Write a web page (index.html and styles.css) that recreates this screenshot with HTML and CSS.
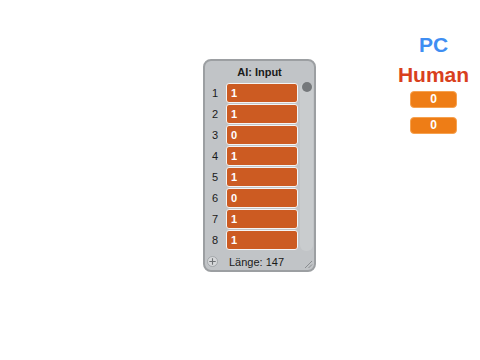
FILE: index.html
```html
<!DOCTYPE html>
<html lang="de">
<head>
    <meta charset="UTF-8">
    <title>Stage</title>
    <link rel="stylesheet" href="styles.css">
</head>
<body>
    <div class="stage">
        <!-- list monitor -->
        <div class="list-monitor">
            <div class="list-title">AI: Input</div>
            <div class="list-body">
                <div class="list-items">
                    <div class="list-row"><span class="row-index">1</span><span class="row-cell">1</span></div>
                    <div class="list-row"><span class="row-index">2</span><span class="row-cell">1</span></div>
                    <div class="list-row"><span class="row-index">3</span><span class="row-cell">0</span></div>
                    <div class="list-row"><span class="row-index">4</span><span class="row-cell">1</span></div>
                    <div class="list-row"><span class="row-index">5</span><span class="row-cell">1</span></div>
                    <div class="list-row"><span class="row-index">6</span><span class="row-cell">0</span></div>
                    <div class="list-row"><span class="row-index">7</span><span class="row-cell">1</span></div>
                    <div class="list-row"><span class="row-index">8</span><span class="row-cell">1</span></div>
                </div>
                <div class="scroll-track"><div class="scroll-knob"></div></div>
            </div>
            <div class="list-footer">
                <span class="add-btn">
                    <svg width="11" height="11" viewBox="0 0 11 11">
                        <circle cx="5.5" cy="5.5" r="5" fill="#d6d8da" stroke="#9b9ea1" stroke-width="0.8"/>
                        <path d="M5.5 2.3 V8.7 M2.3 5.5 H8.7" stroke="#6e7174" stroke-width="1.1"/>
                    </svg>
                </span>
                <span class="list-length">Länge: 147</span>
            </div>
            <svg class="resize-grip" width="9" height="9" viewBox="0 0 9 9">
                <path d="M1 8 L8 1 M4.5 8 L8 4.5" stroke="#8a8d90" stroke-width="1"/>
            </svg>
        </div>

        <!-- score monitors -->
        <div class="score">
            <div class="score-label pc">PC</div>
            <div class="score-label human">Human</div>
            <div class="readout">0</div>
            <div class="readout">0</div>
        </div>
    </div>
</body>
</html>
```

FILE: styles.css
```css
:root {
    --monitor-bg: #c1c4c7;
    --monitor-border: #9c9fa2;
    --list-item: #cc5b22;
    --readout: #ee7d16;
}

body {
    margin: 0;
    background-color: white;
    font-family: 'Liberation Sans', Arial, sans-serif;
}

.stage {
    position: relative;
    width: 480px;
    height: 360px;
    overflow: hidden;
}

.list-monitor {
    position: absolute;
    left: 203px;
    top: 59px;
    width: 109px;
    height: 209px;
    border: 2px solid var(--monitor-border);
    border-radius: 8px;
    background-color: var(--monitor-bg);
    display: flex;
    flex-direction: column;
}

.list-title {
    height: 21px;
    line-height: 22px;
    text-align: center;
    font-size: 11px;
    font-weight: bold;
    color: #1a1a1a;
}

.list-body {
    display: flex;
    flex: 1;
}

.list-items {
    display: flex;
    flex-direction: column;
    gap: 1px;
    padding-top: 1px;
}

.list-row {
    display: flex;
    align-items: center;
    height: 20px;
}

.row-index {
    width: 13px;
    padding-right: 8px;
    text-align: right;
    font-size: 11px;
    color: #1a1a1a;
}

.row-cell {
    box-sizing: border-box;
    width: 72px;
    height: 20px;
    line-height: 18px;
    padding-left: 4px;
    border: 1px solid #f4f4f4;
    border-radius: 3px;
    background-color: var(--list-item);
    color: white;
    font-size: 11px;
    font-weight: bold;
}

.scroll-track {
    width: 13px;
    margin-left: 2px;
    margin-bottom: 2px;
    border-radius: 6px;
    background-color: #c9ccce;
    display: flex;
    justify-content: center;
}

.scroll-knob {
    width: 10px;
    height: 10px;
    border-radius: 50%;
    background-color: #75787b;
}

.list-footer {
    display: flex;
    align-items: center;
    gap: 11px;
    height: 17px;
    padding-left: 2px;
    font-size: 11px;
    color: #1a1a1a;
}

.add-btn {
    display: flex;
}

.resize-grip {
    position: absolute;
    right: 1px;
    bottom: 1px;
}

.score {
    position: absolute;
    left: 390px;
    top: 30px;
    width: 87px;
    display: flex;
    flex-direction: column;
    align-items: center;
}

.score-label {
    font-size: 21px;
    font-weight: bold;
    line-height: 30px;
}

.pc {
    color: #3f8ef2;
}

.human {
    color: #d9401d;
}

.readout {
    box-sizing: border-box;
    width: 47px;
    height: 17px;
    margin-top: 1px;
    margin-bottom: 8px;
    border: 1px solid #f6a250;
    border-radius: 4px;
    background-color: var(--readout);
    color: white;
    font-size: 12px;
    font-weight: bold;
    line-height: 15px;
    text-align: center;
}
```
